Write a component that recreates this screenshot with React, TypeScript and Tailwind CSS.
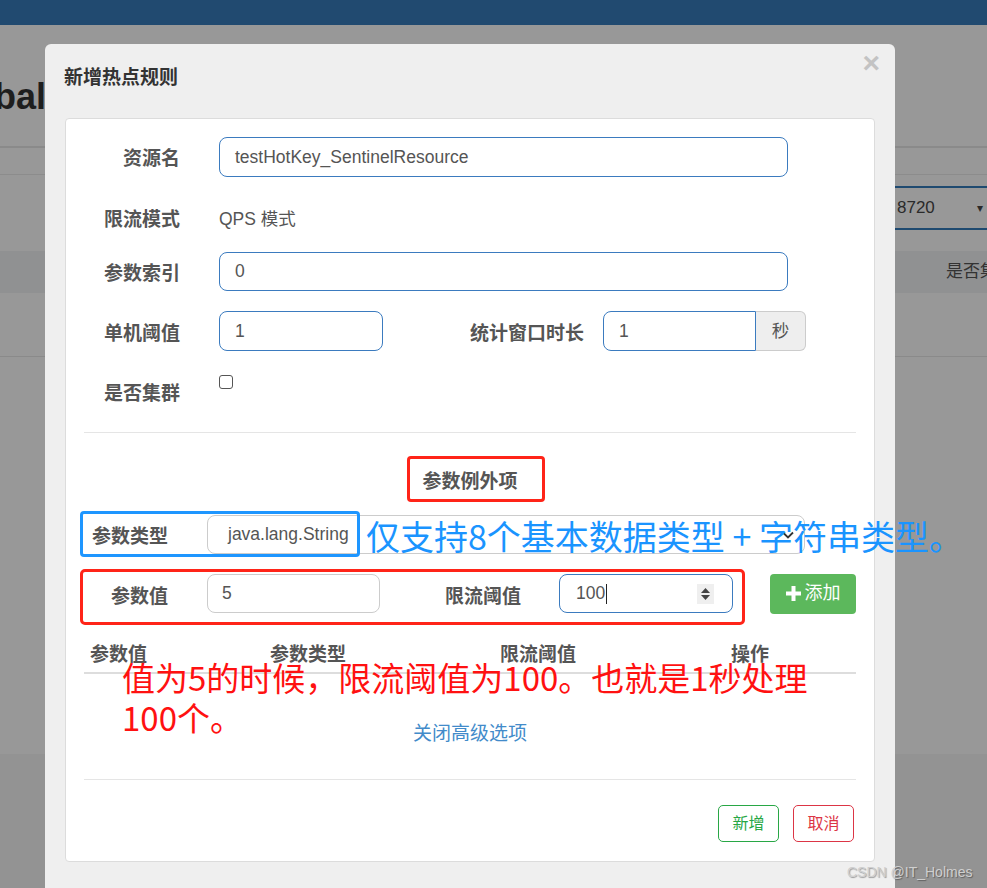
import React from 'react';

const labelCls = 'text-[19px] leading-[26px] font-bold text-[#555]';

const Field: React.FC<{ className?: string; children?: React.ReactNode }> = ({ className = '', children }) => (
  <div className={`flex items-center h-full text-[17.5px] text-[#555] ${className}`}>{children}</div>
);

export default function App() {
  return (
    <div className="relative h-[888px] w-full overflow-hidden bg-[#989898] [font-family:'Liberation_Sans','Noto_Sans_CJK_SC',sans-serif]">
      {/* page behind the dialog */}
      <div className="h-[25px] bg-[#214a70]" />
      <div className="h-[123px] border-b-2 border-[#8a8a8a] pt-[52px]">
        <div className="ml-[-6px] text-[36px] leading-[40px] font-bold text-[#1e1e1e]">bal</div>
      </div>
      <div className="h-[27px] border-b border-[#8c8c8c]" />
      <div className="h-[76px] pt-[11px]">
        <div className="ml-auto flex h-[44px] w-[92px] items-center justify-between border-y-2 border-[#1f4a70] pl-[2px] pr-[4px] text-[17px] text-[#2a2a2a]">
          <span>8720</span>
          <span className="text-[12px]">▾</span>
        </div>
      </div>
      <div className="flex h-[42px] items-center justify-end bg-[#909192] text-[17px] text-[#333]">
        <span className="mr-[-10px]">是否集</span>
      </div>
      <div className="h-[64px] border-b border-[#8a8a8a]" />
      <div className="h-[397px]" />
      <div className="h-[140px] bg-[#939393]" />

      {/* dialog */}
      <div className="absolute left-[45px] top-[44px] h-[860px] w-[850px] rounded-[6px] bg-[#efefef]">
        <div className="relative h-[74px] px-[19px] pt-[22px]">
          <div className="text-[19px] leading-[24px] font-bold text-[#333]">新增热点规则</div>
          <div className="absolute right-[15px] top-[4px] text-[30px] leading-[30px] font-bold text-[#c3c3c3]">×</div>
        </div>

        <div className="mx-[20px] h-[744px] rounded-[4px] border border-[#dcdcdc] bg-white px-[18px] pt-[18px]">
          {/* 资源名 */}
          <div className="flex h-[40px] items-center">
            <div className={`w-[96px] pt-[4px] text-right ${labelCls}`}>资源名</div>
            <div className="ml-[39px] h-[40px] w-[569px] rounded-[8px] border border-[#3b7bbf] px-[15px]">
              <Field>testHotKey_SentinelResource</Field>
            </div>
          </div>
          {/* 限流模式 */}
          <div className="mt-[21px] flex h-[39px] items-center">
            <div className={`w-[96px] pt-[4px] text-right ${labelCls}`}>限流模式</div>
            <div className="ml-[39px] h-full pt-[4px]">
              <Field>QPS 模式</Field>
            </div>
          </div>
          {/* 参数索引 */}
          <div className="mt-[15px] flex h-[39px] items-center">
            <div className={`w-[96px] pt-[4px] text-right ${labelCls}`}>参数索引</div>
            <div className="ml-[39px] h-[39px] w-[569px] rounded-[8px] border border-[#3b7bbf] px-[15px]">
              <Field>0</Field>
            </div>
          </div>
          {/* 单机阈值 / 统计窗口时长 */}
          <div className="mt-[20px] flex h-[40px] items-center">
            <div className={`w-[96px] pt-[5px] text-right ${labelCls}`}>单机阈值</div>
            <div className="ml-[39px] h-[40px] w-[164px] rounded-[8px] border border-[#3b7bbf] px-[15px]">
              <Field>1</Field>
            </div>
            <div className={`ml-[87px] pt-[5px] ${labelCls}`}>统计窗口时长</div>
            <div className="ml-[19px] flex h-[40px]">
              <div className="h-[40px] w-[153px] rounded-l-[8px] border border-[#3b7bbf] px-[15px]">
                <Field>1</Field>
              </div>
              <div className="flex h-[40px] w-[50px] items-center justify-center rounded-r-[6px] border border-l-0 border-[#ccc] bg-[#eee] text-[17.5px] text-[#555]">
                秒
              </div>
            </div>
          </div>
          {/* 是否集群 */}
          <div className="mt-[19px] flex h-[40px] items-start">
            <div className={`w-[96px] pt-[11px] text-right ${labelCls}`}>是否集群</div>
            <div className="ml-[39px] mt-[5px] h-[14px] w-[14px] rounded-[3px] border border-[#555] bg-white" />
          </div>

          <div className="mt-[22px] border-t border-[#e5e5e5]" />

          <div className={`mt-[36px] text-center ${labelCls}`}>参数例外项</div>

          {/* 参数类型 */}
          <div className="mt-[20px] flex h-[39px] items-center">
            <div className={`w-[123px] pl-[8px] pt-[5px] ${labelCls}`}>参数类型</div>
            <div className="flex h-[39px] w-[598px] items-center justify-between rounded-[8px] border border-[#ccc] pl-[20px] pr-[9px] text-[17.5px] text-[#555]">
              <span>java.lang.String</span>
              <svg width="14" height="10" viewBox="0 0 14 10" fill="none">
                <path d="M2 2.5l5 5 5-5" stroke="#333" strokeWidth="1.8" />
              </svg>
            </div>
          </div>

          {/* 参数值 / 限流阈值 */}
          <div className="mt-[20px] flex h-[39px] items-center">
            <div className={`w-[123px] pl-[27px] pt-[6px] ${labelCls}`}>参数值</div>
            <div className="h-[39px] w-[173px] rounded-[8px] border border-[#ccc] pl-[14px]">
              <Field>5</Field>
            </div>
            <div className={`ml-[65px] pt-[6px] ${labelCls}`}>限流阈值</div>
            <div className="ml-[38px] flex h-[39px] w-[174px] items-center justify-between rounded-[8px] border border-[#3b7bbf] pl-[16px] pr-[18px]">
              <div className="flex items-center text-[17.5px] text-[#555]">
                100
                <span className="ml-[1px] inline-block h-[20px] w-[1px] bg-[#222]" />
              </div>
              <div className="flex h-[20px] w-[17px] flex-col items-center justify-center gap-[2px] bg-[#efefef]">
                <svg width="9" height="5" viewBox="0 0 9 5"><path d="M4.5 0L9 5H0z" fill="#444" /></svg>
                <svg width="9" height="5" viewBox="0 0 9 5"><path d="M0 0h9L4.5 5z" fill="#444" /></svg>
              </div>
            </div>
            <div className="ml-auto flex h-[40px] w-[86px] items-center justify-center gap-[4px] rounded-[4px] bg-[#5cb85c] text-[18px] text-white">
              <svg width="15" height="15" viewBox="0 0 15 15">
                <path d="M5.5 0h4v5.5H15v4H9.5V15h-4V9.5H0v-4h5.5z" fill="#fff" />
              </svg>
              <span>添加</span>
            </div>
          </div>

          {/* table header */}
          <div className={`mt-[29px] grid grid-cols-[180px_230px_231px_1fr] border-b-2 border-[#ddd] pb-[4px] pl-[6px] ${labelCls}`}>
            <div>参数值</div>
            <div>参数类型</div>
            <div>限流阈值</div>
            <div>操作</div>
          </div>

          <div className="mt-[47px] text-center text-[19px] leading-[26px] text-[#428bca]">关闭高级选项</div>

          <div className="mt-[32px] border-t border-[#e5e5e5]" />

          <div className="mt-[25px] flex justify-end gap-[14px] pr-[2px]">
            <div className="flex h-[37px] w-[61px] items-center justify-center rounded-[5px] border border-[#28a745] text-[16px] text-[#28a745]">
              新增
            </div>
            <div className="flex h-[37px] w-[61px] items-center justify-center rounded-[5px] border border-[#dc3545] text-[16px] text-[#dc3545]">
              取消
            </div>
          </div>
        </div>
      </div>

      {/* screenshot annotations */}
      <div className="absolute left-[407px] top-[456px] h-[46px] w-[138px] rounded-[4px] border-[3px] border-[#ff2418]" />
      <div className="absolute left-[80px] top-[511px] h-[46px] w-[280px] rounded-[4px] border-[3px] border-[#1e96ff]" />
      <div className="absolute left-[80px] top-[569px] h-[56px] w-[665px] rounded-[5px] border-[3px] border-[#ff2418]" />
      <div className="absolute left-[366px] top-[516px] whitespace-nowrap text-[34px] leading-[40px] text-[#1a94ff] [font-family:'Noto_Sans_CJK_SC',sans-serif]">
        仅支持8个基本数据类型 + 字符串类型。
      </div>
      <div className="absolute left-[122px] top-[657px] whitespace-nowrap text-[33px] leading-[40px] text-[#ff1111] [font-family:'Noto_Sans_CJK_SC',sans-serif]">
        值为5的时候，限流阈值为100。也就是1秒处理
        <br />
        100个。
      </div>
      <div className="absolute left-[847px] top-[863px] text-[14px] leading-[18px] text-[#cfcfcf] [text-shadow:1px_1px_1px_rgba(0,0,0,0.35)]">
        CSDN @IT_Holmes
      </div>
    </div>
  );
}
